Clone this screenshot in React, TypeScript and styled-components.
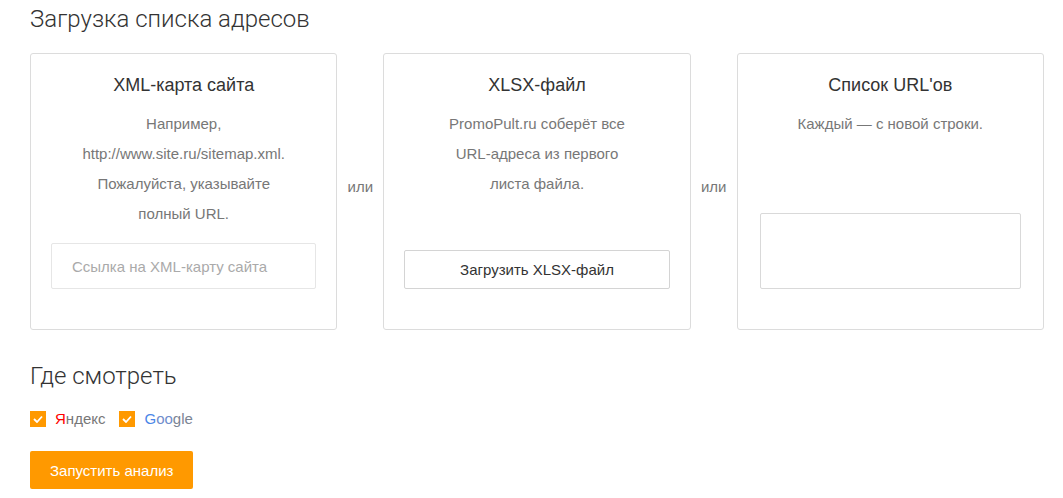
import styled, { createGlobalStyle } from 'styled-components';

const GlobalStyle = createGlobalStyle`
  body {
    margin: 0;
    background: #fff;
    font-family: "Liberation Sans", Arial, sans-serif;
    color: #333;
  }
`;

const Page = styled.div`
  padding: 4px 19px 0 30px;
`;

const SectionTitle = styled.h2<{ top?: number }>`
  margin: ${({ top }) => top ?? 0}px 0 0;
  font-family: Roboto, "Liberation Sans", sans-serif;
  font-weight: 300;
  font-size: 24px;
  line-height: 30px;
  color: #333;
`;

const Sources = styled.div`
  display: flex;
  align-items: center;
  margin-top: 19px;
`;

const Card = styled.div`
  box-sizing: border-box;
  width: 308px;
  height: 277px;
  border: 1px solid #dcdcdc;
  border-radius: 3px;
  padding: 20px 20px 40px;
  display: flex;
  flex-direction: column;
  align-items: center;
`;

const CardTitle = styled.div`
  font-size: 18px;
  line-height: 22px;
  color: #333;
  text-align: center;
`;

const CardText = styled.div`
  margin-top: 13px;
  font-size: 15px;
  line-height: 30px;
  color: #777;
  text-align: center;
  flex: 1;
`;

const Or = styled.div`
  width: 46px;
  margin-bottom: 10px;
  text-align: center;
  font-size: 15px;
  color: #777;
`;

const UrlInput = styled.input`
  box-sizing: border-box;
  width: 100%;
  height: 46px;
  border: 1px solid #e6e6e6;
  border-radius: 2px;
  padding: 0 20px;
  font-family: "Liberation Sans", Arial, sans-serif;
  font-size: 15px;
  outline: none;

  &::placeholder {
    color: #aaa;
  }
`;

const UploadButton = styled.button`
  box-sizing: border-box;
  width: 100%;
  height: 39px;
  background: #fff;
  border: 1px solid #d4d4d4;
  border-radius: 2px;
  font-family: "Liberation Sans", Arial, sans-serif;
  font-size: 15px;
  color: #333;
  cursor: pointer;
`;

const UrlList = styled.textarea`
  box-sizing: border-box;
  width: 261px;
  height: 76px;
  border: 1px solid #d9d9d9;
  border-radius: 2px;
  resize: none;
  outline: none;
`;

const Engines = styled.div`
  display: flex;
  align-items: center;
  gap: 14px;
  margin-top: 19px;
`;

const Engine = styled.label`
  display: flex;
  align-items: center;
  gap: 9px;
  font-size: 15px;
  color: #777;
  cursor: pointer;
`;

const Check = styled.span`
  width: 16px;
  height: 16px;
  background: #ff9900;
  display: flex;
  align-items: center;
  justify-content: center;
`;

const Accent = styled.span<{ color: string }>`
  color: ${({ color }) => color};
`;

const RunButton = styled.button`
  margin-top: 24px;
  height: 38px;
  padding: 0 20px;
  background: #ff9900;
  border: none;
  border-radius: 2px;
  color: #fff;
  font-family: "Liberation Sans", Arial, sans-serif;
  font-size: 15px;
  cursor: pointer;
`;

const Tick = () => (
  <svg width="10" height="8" viewBox="0 0 10 8">
    <path d="M1 4l3 3 5-5.5" fill="none" stroke="#fff" strokeWidth="1.8" />
  </svg>
);

export default function App() {
  return (
    <Page>
      <GlobalStyle />
      <SectionTitle>Загрузка списка адресов</SectionTitle>
      <Sources>
        <Card>
          <CardTitle>XML-карта сайта</CardTitle>
          <CardText>
            Например,
            <br />
            http://www.site.ru/sitemap.xml.
            <br />
            Пожалуйста, указывайте
            <br />
            полный URL.
          </CardText>
          <UrlInput placeholder="Ссылка на XML-карту сайта" />
        </Card>
        <Or>или</Or>
        <Card>
          <CardTitle>XLSX-файл</CardTitle>
          <CardText>
            PromoPult.ru соберёт все
            <br />
            URL-адреса из первого
            <br />
            листа файла.
          </CardText>
          <UploadButton>Загрузить XLSX-файл</UploadButton>
        </Card>
        <Or>или</Or>
        <Card>
          <CardTitle>Список URL'ов</CardTitle>
          <CardText>Каждый — с новой строки.</CardText>
          <UrlList />
        </Card>
      </Sources>
      <SectionTitle top={31}>Где смотреть</SectionTitle>
      <Engines>
        <Engine>
          <Check>
            <Tick />
          </Check>
          <span>
            <Accent color="#f00">Я</Accent>ндекс
          </span>
        </Engine>
        <Engine>
          <Check>
            <Tick />
          </Check>
          <span>
            <Accent color="#4a86e8">G</Accent>
            <Accent color="#6f8ccc">oo</Accent>
            <Accent color="#7b8494">gle</Accent>
          </span>
        </Engine>
      </Engines>
      <RunButton>Запустить анализ</RunButton>
    </Page>
  );
}
